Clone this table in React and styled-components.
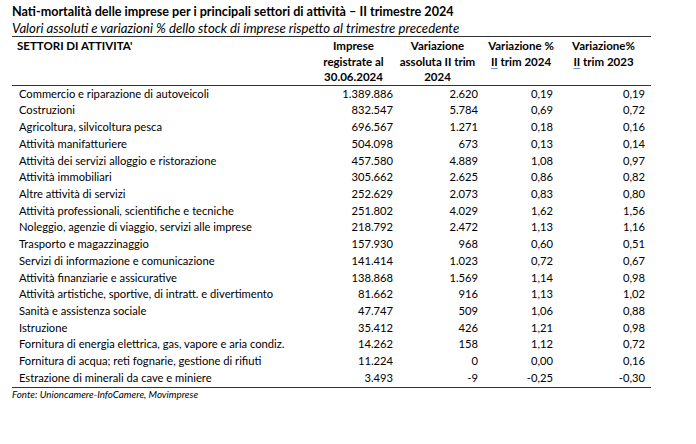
import styled, { createGlobalStyle } from 'styled-components';

const GlobalStyle = createGlobalStyle`
  body {
    margin: 0;
    background: #fff;
    color: #000;
    font-family: Lato, 'Liberation Sans', sans-serif;
  }
`;

const Page = styled.div`
  width: 696px;
  height: 444px;
  padding-top: 4px;
  box-sizing: border-box;
`;

const Title = styled.div`
  padding-left: 12px;
  font-size: 12.6px;
  font-weight: 700;
  line-height: 16px;
`;

const Subtitle = styled.div`
  padding-left: 12px;
  font-size: 13.2px;
  font-style: italic;
  line-height: 16px;
`;

const Table = styled.div`
  margin-left: 12px;
  width: 639px;
  border-top: 1.5px solid #333;
  border-bottom: 1.5px solid #333;
`;

const Header = styled.div`
  display: grid;
  grid-template-columns: 300px 83px 85px 82px 89px;
  border-bottom: 1.5px solid #333;
  padding: 1px 0 0;
  font-size: 11.5px;
  font-weight: 700;
  line-height: 15.6px;
`;

const HeadCell = styled.div`
  text-align: ${(p) => (p.$left ? 'left' : 'center')};
  padding-left: ${(p) => (p.$left ? '5px' : '0')};
  padding-right: ${(p) => p.$pr || 0}px;
`;

const Mark = styled.span`
  text-decoration: underline;
  text-decoration-color: #6b8fd6;
  text-underline-offset: 2px;
`;

const Body = styled.div`
  padding: 0 0 1px;
`;

const Row = styled.div`
  display: grid;
  grid-template-columns: 300px 83px 85px 82px 89px;
  font-size: 11.2px;
  line-height: 16.7px;
`;

const Label = styled.div`
  padding-left: 7px;
  white-space: nowrap;
`;

const Num = styled.div`
  text-align: right;
  padding-right: ${(p) => p.$pr}px;
`;

const Source = styled.div`
  padding-left: 12px;
  font-size: 9.8px;
  font-style: italic;
  line-height: 12px;
`;

const rows = [
  ['Commercio e riparazione di autoveicoli', '1.389.886', '2.620', '0,19', '0,19'],
  ['Costruzioni', '832.547', '5.784', '0,69', '0,72'],
  ['Agricoltura, silvicoltura pesca', '696.567', '1.271', '0,18', '0,16'],
  ['Attività manifatturiere', '504.098', '673', '0,13', '0,14'],
  ['Attività dei servizi alloggio e ristorazione', '457.580', '4.889', '1,08', '0,97'],
  ['Attività immobiliari', '305.662', '2.625', '0,86', '0,82'],
  ['Altre attività di servizi', '252.629', '2.073', '0,83', '0,80'],
  ['Attività professionali, scientifiche e tecniche', '251.802', '4.029', '1,62', '1,56'],
  ['Noleggio, agenzie di viaggio, servizi alle imprese', '218.792', '2.472', '1,13', '1,16'],
  ['Trasporto e magazzinaggio', '157.930', '968', '0,60', '0,51'],
  ['Servizi di informazione e comunicazione', '141.414', '1.023', '0,72', '0,67'],
  ['Attività finanziarie e assicurative', '138.868', '1.569', '1,14', '0,98'],
  ['Attività artistiche, sportive, di intratt. e divertimento', '81.662', '916', '1,13', '1,02'],
  ['Sanità e assistenza sociale', '47.747', '509', '1,06', '0,88'],
  ['Istruzione', '35.412', '426', '1,21', '0,98'],
  ['Fornitura di energia elettrica, gas, vapore e aria condiz.', '14.262', '158', '1,12', '0,72'],
  ['Fornitura di acqua; reti fognarie, gestione di rifiuti', '11.224', '0', '0,00', '0,16'],
  ['Estrazione di minerali da cave e miniere', '3.493', '-9', '-0,25', '-0,30'],
];

const pads = [2, 2, 9, 6];

export default function App() {
  return (
    <Page>
      <GlobalStyle />
      <Title>Nati-mortalità delle imprese per i principali settori di attività – II trimestre 2024</Title>
      <Subtitle>Valori assoluti e variazioni % dello stock di imprese rispetto al trimestre precedente</Subtitle>
      <Table>
        <Header>
          <HeadCell $left>SETTORI DI ATTIVITA'</HeadCell>
          <HeadCell>
            Imprese
            <br />
            registrate al
            <br />
            30.06.2024
          </HeadCell>
          <HeadCell>
            Variazione
            <br />
            assoluta II trim
            <br />
            2024
          </HeadCell>
          <HeadCell>
            Variazione %
            <br />
            <Mark>II</Mark> trim 2024
          </HeadCell>
          <HeadCell $pr={6}>
            Variazione%
            <br />
            <Mark>II</Mark> trim 2023
          </HeadCell>
        </Header>
        <Body>
          {rows.map((r) => (
            <Row key={r[0]}>
              <Label>{r[0]}</Label>
              {r.slice(1).map((v, i) => (
                <Num key={i} $pr={pads[i]}>
                  {v}
                </Num>
              ))}
            </Row>
          ))}
        </Body>
      </Table>
      <Source>Fonte: Unioncamere-InfoCamere, Movimprese</Source>
    </Page>
  );
}
